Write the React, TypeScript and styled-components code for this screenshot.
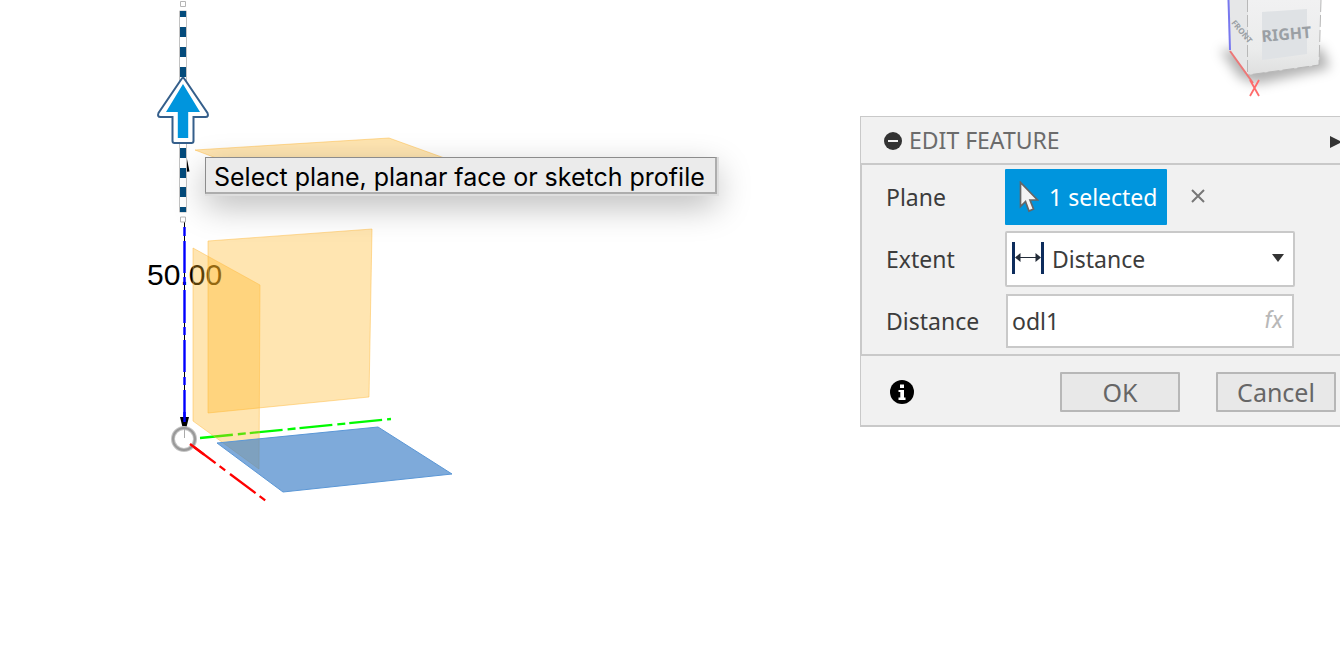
import React from "react";
import styled, { createGlobalStyle } from "styled-components";

const GlobalStyle = createGlobalStyle`
  *, *::before, *::after { box-sizing: border-box; }
  body { margin: 0; background: #fff; overflow: hidden; }
  button, input, select { font: inherit; color: inherit; margin: 0; }
`;

const line = "#c9c9c9";

const Workspace = styled.main`
  display: grid;
  grid-template-columns: minmax(0, 1fr) 480px;
  min-height: 100vh;
  overflow: hidden;
  font-family: "Noto Sans", "Open Sans", sans-serif;
  font-size: 23px;
  line-height: 32px;
  color: #3c3c3c;
`;

const Viewport = styled.section`
  position: relative;
`;

const SceneDrawing = styled.svg`
  display: block;
  overflow: visible;
`;

const DimensionText = styled.text`
  font-family: "Liberation Sans", Arial, sans-serif;
  font-size: 30px;
  fill: #000;
`;

const Tooltip = styled.div`
  position: absolute;
  left: 205px;
  top: 157px;
  height: 37px;
  padding: 0 10px 0 8px;
  border: 1px solid #8c8c8c;
  border-right: 2px solid #adadad;
  border-bottom: 2px solid #adadad;
  background: #ebebeb;
  color: #000;
  font-family: Inter, Roboto, sans-serif;
  font-size: 25px;
  line-height: 38px;
  white-space: nowrap;
  box-shadow: 1px 1px 0 1px #dedede, 0 12px 34px rgba(0, 0, 0, 0.28);
`;

const Sidebar = styled.aside`
  display: flex;
  flex-direction: column;
`;

const ViewCube = styled.svg`
  display: block;
  align-self: flex-end;
  flex: none;
`;

const CubeLabel = styled.text<{ $size: number }>`
  font-family: "Noto Sans", "Open Sans", sans-serif;
  font-size: ${(p) => p.$size}px;
  font-weight: 700;
  fill: #9a9fa4;
`;

const Panel = styled.form`
  background: #f1f1f1;
  border-top: 1px solid ${line};
  border-left: 1px solid ${line};
  border-bottom: 2px solid ${line};
`;

const PanelHeader = styled.header`
  display: flex;
  align-items: center;
  height: 48px;
  padding-left: 23px;
  border-bottom: 2px solid ${line};
`;

const IconButton = styled.button`
  display: flex;
  flex: none;
  padding: 0;
  border: 0;
  background: none;
`;

const Title = styled.h2`
  flex: 1;
  margin: 0 0 0 7px;
  font-size: 23px;
  font-weight: 400;
  color: #6b6b6b;
`;

const PanelBody = styled.div`
  display: flex;
  flex-direction: column;
  gap: 6px;
  padding: 4px 0 5px 24px;
  border-left: 1px solid ${line};
`;

const Row = styled.div`
  display: grid;
  grid-template-columns: 119px 290px;
  align-items: center;
  height: 56px;
`;

const Selection = styled.div`
  display: flex;
  align-items: center;
  gap: 23px;
`;

const SelectedButton = styled.button`
  display: flex;
  align-items: center;
  gap: 10px;
  width: 162px;
  height: 56px;
  padding: 0 0 0 14px;
  border: 0;
  border-radius: 1px;
  background: #0095dd;
  color: #fff;
  white-space: nowrap;
`;

const Field = styled.div`
  position: relative;
`;

const FieldIcon = styled.svg<{ $side: "left" | "right" }>`
  position: absolute;
  top: 10px;
  ${(p) => p.$side}: 7px;
  pointer-events: none;
`;

const Select = styled.select`
  display: block;
  appearance: none;
  width: 100%;
  height: 56px;
  padding: 0 32px 0 45px;
  border: 2px solid ${line};
  border-radius: 2px;
  background: #fff;
`;

const TextField = styled.div`
  display: flex;
  align-items: center;
  height: 54px;
  margin: 0 1px;
  padding: 0 9px 0 4px;
  border: 2px solid ${line};
  background: #fff;
`;

const Input = styled.input`
  flex: 1;
  min-width: 0;
  padding: 0;
  border: 0;
  outline: 0;
  background: none;
`;

const FxMark = styled.span`
  font-family: Roboto, sans-serif;
  font-style: italic;
  color: #b8b8b8;
`;

const PanelFooter = styled.footer`
  display: flex;
  align-items: center;
  height: 71px;
  padding: 2px 4px 0 29px;
  border-top: 2px solid ${line};
`;

const Actions = styled.div`
  display: flex;
  gap: 36px;
  margin-left: auto;
`;

const ActionButton = styled.button`
  width: 120px;
  height: 40px;
  padding: 0;
  border: 2px solid #b7b7b7;
  border-radius: 1px;
  background: #e8e8e8;
  color: #666;
  font-size: 25px;
  line-height: 36px;
`;

const dashTops = [27, 47, 67, 148, 168, 187];

function Scene() {
  return (
    <SceneDrawing width="500" height="520" viewBox="0 0 500 520" role="img" aria-label="Origin planes">
      <g fill="none" strokeWidth="2.300">
        <path d="M200 438 391 419" stroke="#00fa00" strokeDasharray="33 5 8 4" />
        <path d="M190 444 266 501" stroke="#f00" strokeDasharray="32 5 7 6" />
      </g>
      <DimensionText x="147" y="285">50.00</DimensionText>
      <path d="M184.500 220V432" stroke="#000" />
      <path d="M184.500 227v9m0 5v32m0 4v8m0 5v33m0 4v8m0 5v32m0 5v8m0 5v32" stroke="#00f" strokeWidth="2.4" />
      <g fill="#ffb520" fillOpacity=".35" stroke="#ffbd45" strokeOpacity=".5">
        <path d="M195 150 389 138 486 173 290 186Z" />
        <path d="M208 241 372 229 369 397 208 413Z" />
        <path d="M193 248 260 285 259 469 193 421Z" />
      </g>
      <path d="M217 443 378 427 452 474 283 492Z" fill="#3b7ec7" fillOpacity=".66" stroke="#5b97d6" />
      <path d="M180 417h9l-3 12h-3Z" fill="#000" />
      <path d="M184.500 412v10" stroke="#00f" strokeWidth="2.4" />
      <circle cx="184" cy="439" r="11" fill="#fff" fillOpacity=".9" stroke="#c4c4c4" strokeWidth="4" />
      <circle cx="184" cy="439" r="11" fill="none" stroke="#999" strokeWidth="2" />
      <path d="M184.500 429v9" stroke="#aaa" />
      <path d="M190 444 204 454.500" stroke="#f00" strokeWidth="2.3" />
      <path d="M186 154 189.500 171.500 184 172Z" fill="#000" />
      <path d="M179.500 11h7v201h-7Z" fill="#fff" stroke="#c2c2c2" />
      <g fill="#044b7b">
        <path d="M180 11h6v6h-6ZM180 207h6v5h-6Z" />
        {dashTops.map((y) => (
          <rect key={y} x="180" y={y} width="6" height="10" />
        ))}
      </g>
      <path d="M180.500 1.500h5v5h-5ZM180.500 217h5v5h-5Z" fill="#fff" stroke="#b5b5b5" />
      <path
        d="M181.500 79Q183 76.500 184.500 79L207.500 113Q209 117 205.500 117H193.500V141Q193.500 143 191.500 143H174.500Q172.500 143 172.500 141V117H160.500Q157 117 158.500 113Z"
        fill="#fff" stroke="#355f8b" strokeWidth="2"
      />
      <path d="M183 84 200 112H188.200V138H177.800V112H166Z" fill="#0095dd" />
    </SceneDrawing>
  );
}

function Cube() {
  return (
    <ViewCube width="140" height="116" viewBox="0 0 140 116" role="img" aria-label="View cube">
      <defs>
        <linearGradient id="rightFace" x1="0" y1="0" x2="0" y2="1">
          <stop offset="0" stopColor="#f1f1f2" />
          <stop offset=".65" stopColor="#ebecec" />
          <stop offset="1" stopColor="#dfdfdf" />
        </linearGradient>
        <filter id="soft" x="-40%" y="-40%" width="180%" height="180%">
          <feGaussianBlur stdDeviation="6" />
        </filter>
      </defs>
      <path d="M20 50 122 48 130 68 58 84 40 78Z" fill="#000" fillOpacity=".3" filter="url(#soft)" />
      <path d="M28 0H48V75L30 51Z" fill="#e6e7e8" />
      <path d="M48 0H121L119 65 48 75Z" fill="url(#rightFace)" />
      <path d="M62 12 107 9V54L62 60Z" fill="#dfe2e5" />
      <path d="M47.500 0V75M121 0 119 65 48 75" fill="none" stroke="#b8b8b8" strokeDasharray="12 3" />
      <path d="M28.500 0 30 50" stroke="#7878ef" strokeWidth="2" />
      <path d="M30 51 53 83" stroke="#ed7777" strokeWidth="2" />
      <CubeLabel $size={16} transform="translate(62 42) rotate(-5)">RIGHT</CubeLabel>
      <CubeLabel $size={8} transform="translate(31 23) rotate(50)">FRONT</CubeLabel>
      <path d="M50 80 59 96M59 80 50 96" stroke="#ff6b6b" strokeWidth="1.800" />
    </ViewCube>
  );
}

export default function App() {
  return (
    <>
      <GlobalStyle />
      <Workspace>
        <Viewport>
          <Scene />
          <Tooltip role="tooltip">Select plane, planar face or sketch profile</Tooltip>
        </Viewport>
        <Sidebar>
          <Cube />
          <Panel onSubmit={(e) => e.preventDefault()}>
            <PanelHeader>
              <IconButton type="button" aria-label="Collapse">
                <svg width="18" height="20" viewBox="0 0 18 20">
                  <circle cx="9" cy="11" r="9" fill="#333" />
                  <path d="M4 11h10" stroke="#f1f1f1" strokeWidth="2" />
                </svg>
              </IconButton>
              <Title>EDIT FEATURE</Title>
              <IconButton type="button" aria-label="Expand">
                <svg width="10" height="16" viewBox="0 0 10 16">
                  <path d="M0 4 12 10 0 16Z" fill="#333" />
                </svg>
              </IconButton>
            </PanelHeader>
            <PanelBody>
              <Row>
                <label htmlFor="plane">Plane</label>
                <Selection>
                  <SelectedButton id="plane" type="button">
                    <svg width="20" height="32" viewBox="0 0 20 32">
                      <path d="M1.500 1.500V25.500L6.500 20.500 10 30 14.500 28 11 19H18.500Z" fill="#f4f4f4" stroke="#666" strokeWidth="1.700" />
                    </svg>
                    1 selected
                  </SelectedButton>
                  <IconButton type="button" aria-label="Clear selection">
                    <svg width="16" height="18" viewBox="0 0 16 18">
                      <path d="M2 2 14 14M14 2 2 14" stroke="#777" strokeWidth="2" />
                    </svg>
                  </IconButton>
                </Selection>
              </Row>
              <Row>
                <label htmlFor="extent">Extent</label>
                <Field>
                  <Select id="extent" defaultValue="Distance">
                    <option>Distance</option>
                  </Select>
                  <FieldIcon $side="left" width="32" height="34" viewBox="0 0 32 34">
                    <path d="M1.500 1V33M30.500 1V33" stroke="#0d2c5c" strokeWidth="3" />
                    <path d="M5 16.500H27" stroke="#222b38" />
                    <path d="M3 16.500 8.500 12V21ZM29 16.500 23.500 12V21Z" fill="#222b38" />
                  </FieldIcon>
                  <FieldIcon $side="right" width="20" height="34" viewBox="0 0 20 34">
                    <path d="M4 13H16L10 21Z" fill="#333" />
                  </FieldIcon>
                </Field>
              </Row>
              <Row>
                <label htmlFor="distance">Distance</label>
                <TextField>
                  <Input id="distance" type="text" defaultValue="odl1" />
                  <FxMark>fx</FxMark>
                </TextField>
              </Row>
            </PanelBody>
            <PanelFooter>
              <IconButton type="button" aria-label="Information">
                <svg width="24" height="24" viewBox="0 0 24 24">
                  <circle cx="12" cy="12" r="12" fill="#000" />
                  <path d="M10 4.500h4v3.500h-4ZM8.500 10H14V17.500H15.500V20H8.500V17.500H10.300V12H8.500Z" fill="#fff" />
                </svg>
              </IconButton>
              <Actions>
                <ActionButton type="submit">OK</ActionButton>
                <ActionButton type="button">Cancel</ActionButton>
              </Actions>
            </PanelFooter>
          </Panel>
        </Sidebar>
      </Workspace>
    </>
  );
}
